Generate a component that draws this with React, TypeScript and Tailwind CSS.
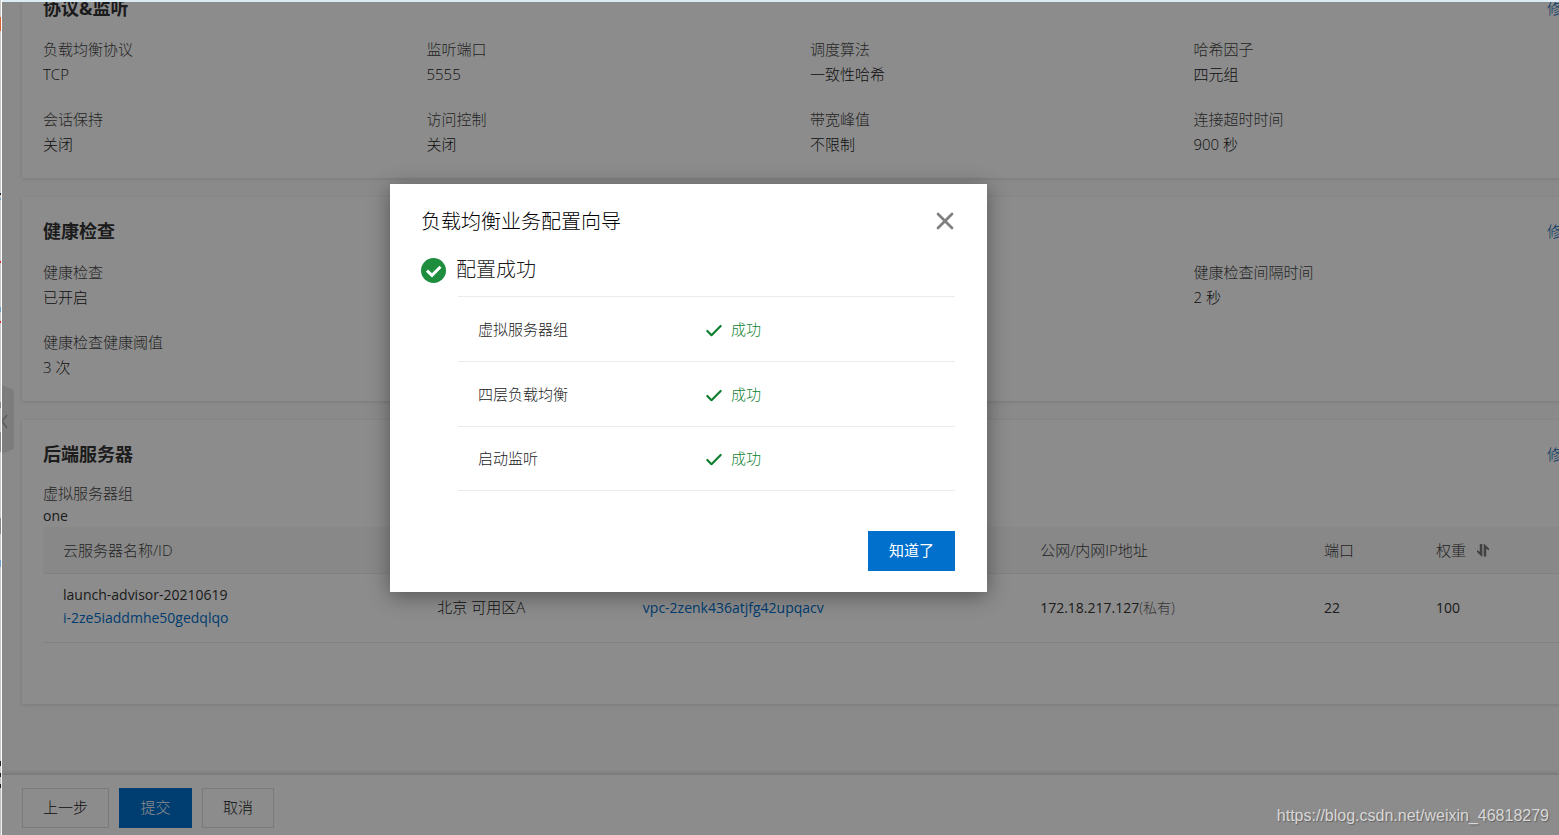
import React from "react";
import { Check, X } from "lucide-react";

type Item = { label: string; value: string; place?: string };

const listener: Item[] = [
  { label: "负载均衡协议", value: "TCP" },
  { label: "监听端口", value: "5555" },
  { label: "调度算法", value: "一致性哈希" },
  { label: "哈希因子", value: "四元组" },
  { label: "会话保持", value: "关闭" },
  { label: "访问控制", value: "关闭" },
  { label: "带宽峰值", value: "不限制" },
  { label: "连接超时时间", value: "900 秒" },
];

const health: Item[] = [
  { label: "健康检查", value: "已开启" },
  { label: "健康检查间隔时间", value: "2 秒", place: "col-start-4" },
  { label: "健康检查健康阈值", value: "3 次" },
];

const steps = ["虚拟服务器组", "四层负载均衡", "启动监听"];

function Card({ title, className, children }: { title: string; className: string; children: React.ReactNode }) {
  return (
    <section className={`bg-white px-[21px] pt-5 shadow-[0_1px_4px_rgba(0,0,0,0.13)] ${className}`}>
      <header className="flex items-center justify-between">
        <h2 className="text-[18px] leading-7 font-bold text-[#333]">{title}</h2>
        <a href="#edit" className="text-[#0064b8]">修改</a>
      </header>
      {children}
    </section>
  );
}

function Items({ items }: { items: Item[] }) {
  return (
    <dl className="mt-[15px] grid grid-cols-4 gap-y-5 leading-[25px]">
      {items.map((it) => (
        <div key={it.label} className={it.place}>
          <dt className="text-[#444]">{it.label}</dt>
          <dd>{it.value}</dd>
        </div>
      ))}
    </dl>
  );
}

function SortIcon() {
  return (
    <svg width="12" height="14" viewBox="0 0 12 14" fill="#777" aria-hidden="true">
      <path d="M5.3 1V13.6H4.6L0 9V7L2.8 8.8V1Z" />
      <path d="M6.7 13.6V1H7.4L12 5.6V7.6L9.2 5.8V13.6Z" />
    </svg>
  );
}

function EdgeMarks() {
  return (
    <svg width="1" height="835" viewBox="0 0 1 835" aria-hidden="true" className="shrink-0">
      <path d="M0 0H1V835H0Z" fill="#c8c8c8" />
      <path d="M0 17H1V31H0Z" fill="#d9602f" />
      <path d="M0 193H1V195H0ZM0 761H1V766H0ZM0 773H1V777H0ZM0 784H1V788H0Z" fill="#222" />
      <path d="M0 198H1V200H0ZM0 307H1V312H0ZM0 560H1V567H0Z" fill="#6f9fc8" />
      <path d="M0 261H1V263H0ZM0 321H1V323H0Z" fill="#d22" />
      <path d="M0 402H1V408H0ZM0 432H1V452H0ZM0 518H1V534H0Z" fill="#888" />
    </svg>
  );
}

export default function App() {
  return (
    <div className="flex h-screen overflow-hidden bg-white font-['Open_Sans','Noto_Sans_CJK_SC',sans-serif] text-[15px] font-light text-[#1a1a1a]">
      <div className="w-[2px] shrink-0 overflow-hidden bg-white">
        <EdgeMarks />
      </div>
      <div className="relative flex min-w-0 flex-1 flex-col border-t-2 border-[#dcecf5] bg-[#fcfcfc]">
        <main className="min-h-0 flex-1 overflow-hidden pl-5">
          <div className="-mt-7 -mr-[39px] flex flex-col gap-[19px]">
            <Card title="协议&监听" className="pb-[21px]">
              <Items items={listener} />
            </Card>
            <Card title="健康检查" className="pb-[21px]">
              <Items items={health} />
            </Card>
            <Card title="后端服务器" className="pb-[61px]">
              <dl className="mt-[14px]">
                <dt className="leading-[22px] text-[#444]">虚拟服务器组</dt>
                <dd className="text-sm leading-[23px] font-normal text-[#333]">one</dd>
              </dl>
              <table className="w-full table-fixed border-collapse text-left">
                <colgroup>
                  <col className="w-[24.4%]" />
                  <col className="w-[13.4%]" />
                  <col className="w-[25.9%]" />
                  <col className="w-[18.5%]" />
                  <col className="w-[7.3%]" />
                  <col />
                </colgroup>
                <thead>
                  <tr className="h-[46px] border-b border-[#ebebeb] bg-[#f7f7f7] text-[#444]">
                    <th className="px-5 font-light">云服务器名称/ID</th>
                    <th />
                    <th />
                    <th className="px-5 font-light">公网/内网IP地址</th>
                    <th className="px-5 font-light">端口</th>
                    <th className="px-5 font-light">
                      <button type="button" className="flex items-center gap-[11px]">
                        权重
                        <SortIcon />
                      </button>
                    </th>
                  </tr>
                </thead>
                <tbody>
                  <tr className="h-[69px] border-b border-[#ebebeb]">
                    <td className="px-5 pb-[3px] text-sm leading-[23px] font-normal text-[#333]">
                      launch-advisor-20210619
                      <br />
                      <a href="#instance" className="text-[#0070cc]">i-2ze5iaddmhe50gedqlqo</a>
                    </td>
                    <td className="px-5">北京 可用区A</td>
                    <td className="px-5 text-sm font-normal">
                      <a href="#vpc" className="text-[#0070cc]">vpc-2zenk436atjfg42upqacv</a>
                    </td>
                    <td className="px-5 text-sm font-normal text-[#333]">
                      172.18.217.127<span className="font-light text-[#666]">(私有)</span>
                    </td>
                    <td className="px-5 text-sm font-normal text-[#333]">22</td>
                    <td className="px-5 text-sm font-normal text-[#333]">100</td>
                  </tr>
                </tbody>
              </table>
            </Card>
          </div>
        </main>

        <footer className="flex h-[61px] shrink-0 items-start gap-[10px] border-t border-[#dedede] bg-white pt-[13px] pl-5 shadow-[0_-1px_4px_rgba(0,0,0,0.15)]">
          <button type="button" className="h-10 border border-[#dedede] px-5 pb-[2px]">上一步</button>
          <button type="button" className="h-10 min-w-[73px] bg-[#0070cc] px-5 pb-[2px] text-white">提交</button>
          <button type="button" className="h-10 border border-[#dedede] px-5 pb-[2px]">取消</button>
        </footer>

        <button type="button" aria-label="收起" className="absolute top-[383px] left-0 h-[70px] w-3">
          <svg width="12" height="70" viewBox="0 0 12 70" aria-hidden="true">
            <path d="M0 0L12 5V64L0 69Z" fill="#e4e4e4" />
            <path d="M5 30L0 36L5 43" fill="none" stroke="#aaa" strokeWidth="1.6" />
          </svg>
        </button>

        <div className="absolute inset-0 flex items-start justify-center bg-black/45 pt-[182px] pr-[184px]">
          <div role="dialog" aria-modal="true" aria-labelledby="guide-title" className="w-full max-w-[597px] bg-white pt-[21px] pr-8 pb-[21px] pl-[31px] shadow-[0_4px_20px_rgba(0,0,0,0.4)]">
            <div className="flex items-center justify-between">
              <h1 id="guide-title" className="text-xl leading-[34px] font-light text-black">负载均衡业务配置向导</h1>
              <button type="button" aria-label="关闭" className="flex w-5 justify-center pb-[2px] text-[#808080]">
                <X size={28} strokeWidth={2.4} className="shrink-0" />
              </button>
            </div>
            <div className="mt-4 flex items-center gap-[10px]">
              <svg width="25" height="25" viewBox="0 0 25 25" aria-hidden="true">
                <circle cx="12.5" cy="12.5" r="12.5" fill="#1e8e3e" />
                <path d="M6 12.6L11 17.3L19.5 8.8" fill="none" stroke="#fff" strokeWidth="3" />
              </svg>
              <p className="text-xl leading-[30px]">配置成功</p>
            </div>
            <ul className="mt-[11px] ml-[37px] border-t border-[#ebebeb]">
              {steps.map((step) => (
                <li key={step} className="flex h-[65px] items-center border-b border-[#ebebeb] px-5 last:h-16">
                  <span className="w-[227px]">{step}</span>
                  <span className="flex items-center gap-2 text-[#0d7f2f]">
                    <Check size={20} strokeWidth={2.6} className="-mx-px mt-[3px] shrink-0" />
                    成功
                  </span>
                </li>
              ))}
            </ul>
            <div className="mt-10 flex justify-end">
              <button type="button" className="h-10 bg-[#0070cc] px-[21px] pb-[2px] font-normal text-white">知道了</button>
            </div>
          </div>
        </div>

        <div className="absolute right-[10px] bottom-[9px] font-['Liberation_Sans',sans-serif] text-base leading-5 font-normal text-[#d8d8d8] [text-shadow:1px_1px_1px_rgba(0,0,0,0.3)]">
          https://blog.csdn.net/weixin_46818279
        </div>
      </div>
    </div>
  );
}
